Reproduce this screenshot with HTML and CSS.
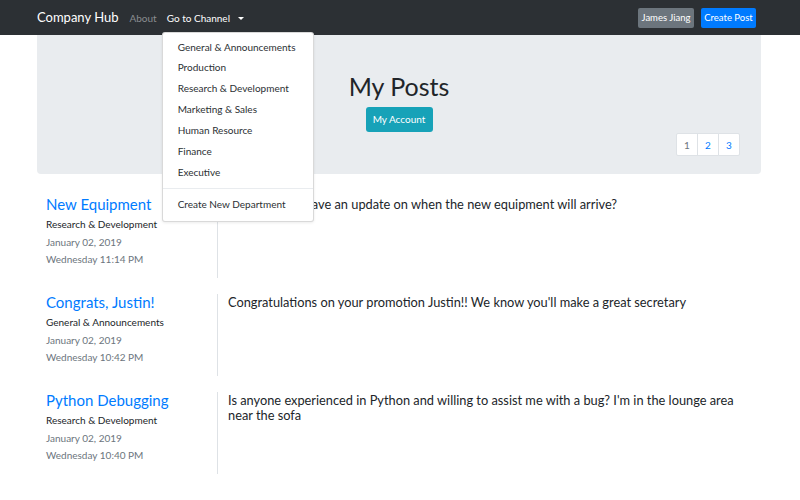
FILE: index.html
```html
<!DOCTYPE html>
<html>
<head>
<meta charset="utf-8">
<title>Company Hub</title>
<link rel="stylesheet" href="styles.css">
</head>
<body>
<nav class="navbar">
  <div class="nav-left">
    <a class="brand" href="#">Company Hub</a>
    <a class="nav-link muted" href="#">About</a>
    <div class="dropdown">
      <a class="nav-link active" href="#">Go to Channel <span class="caret"></span></a>
      <div class="dropdown-menu">
        <a class="dropdown-item" href="#">General &amp; Announcements</a>
        <a class="dropdown-item" href="#">Production</a>
        <a class="dropdown-item" href="#">Research &amp; Development</a>
        <a class="dropdown-item" href="#">Marketing &amp; Sales</a>
        <a class="dropdown-item" href="#">Human Resource</a>
        <a class="dropdown-item" href="#">Finance</a>
        <a class="dropdown-item" href="#">Executive</a>
        <div class="dropdown-divider"></div>
        <a class="dropdown-item" href="#">Create New Department</a>
      </div>
    </div>
  </div>
  <div class="nav-right">
    <a class="btn btn-secondary" href="#">James Jiang</a>
    <a class="btn btn-primary" href="#">Create Post</a>
  </div>
</nav>

<main class="container">
  <section class="jumbotron">
    <h1 class="title">My Posts</h1>
    <a class="btn btn-info" href="#">My Account</a>
    <ul class="pagination">
      <li class="page-item disabled">1</li>
      <li class="page-item">2</li>
      <li class="page-item">3</li>
    </ul>
  </section>

  <article class="post">
    <div class="post-meta">
      <h4 class="post-title">New Equipment</h4>
      <div class="post-channel">Research &amp; Development</div>
      <div class="post-date">January 02, 2019</div>
      <div class="post-date">Wednesday 11:14 PM</div>
    </div>
    <div class="post-body">Does anyone have an update on when the new equipment will arrive?</div>
  </article>

  <article class="post">
    <div class="post-meta">
      <h4 class="post-title">Congrats, Justin!</h4>
      <div class="post-channel">General &amp; Announcements</div>
      <div class="post-date">January 02, 2019</div>
      <div class="post-date">Wednesday 10:42 PM</div>
    </div>
    <div class="post-body">Congratulations on your promotion Justin!! We know you'll make a great secretary</div>
  </article>

  <article class="post">
    <div class="post-meta">
      <h4 class="post-title">Python Debugging</h4>
      <div class="post-channel">Research &amp; Development</div>
      <div class="post-date">January 02, 2019</div>
      <div class="post-date">Wednesday 10:40 PM</div>
    </div>
    <div class="post-body">Is anyone experienced in Python and willing to assist me with a bug? I'm in the lounge area near the sofa</div>
  </article>
</main>
</body>
</html>
```

FILE: styles.css
```css
* { box-sizing: border-box; }
html, body { margin: 0; padding: 0; }
body {
  font-family: Lato, "Open Sans", sans-serif;
  color: #212529;
  background: #fff;
  width: 800px;
  height: 500px;
  overflow: hidden;
}
a { text-decoration: none; color: inherit; }

.navbar {
  height: 35px;
  background: #2c3034;
  display: flex;
  align-items: center;
  justify-content: space-between;
  padding: 0 44px 0 37px;
}
.nav-left { display: flex; align-items: center; }
.brand {
  display: block;
  color: #fff;
  font-size: 13px;
  line-height: 16px;
  margin-right: 11px;
  margin-top: -1px;
}
.nav-link {
  display: block;
  font-size: 10px;
  line-height: 14px;
  margin-right: 10px;
  white-space: nowrap;
}
.nav-link.muted { color: #8a8d90; }
.nav-link.active { color: #fff; }
.caret {
  display: inline-block;
  width: 0; height: 0;
  margin-left: 5px;
  vertical-align: 2px;
  border-left: 3px solid transparent;
  border-right: 3px solid transparent;
  border-top: 3px solid #fff;
}
.dropdown { position: relative; }
.dropdown-menu {
  position: absolute;
  top: 21px;
  left: -5px;
  width: 152px;
  background: #fff;
  border: 1px solid rgba(0,0,0,.15);
  border-radius: 3px;
  box-shadow: 0 1px 3px rgba(0,0,0,.08);
  padding: 4px 0 6px;
  z-index: 10;
  display: flex;
  flex-direction: column;
}
.dropdown-item {
  display: block;
  font-size: 10px;
  color: #2b2f33;
  line-height: 20.9px;
  padding: 0 15px;
  white-space: nowrap;
}
.dropdown-divider {
  height: 0;
  border-top: 1px solid #e9ecef;
  margin: 5px 0 5px;
}
.nav-right { display: flex; gap: 7px; }
.btn {
  display: inline-block;
  font-size: 9.5px;
  line-height: 20px;
  height: 20px;
  padding: 0;
  border-radius: 2px;
  color: #fff;
  text-align: center;
  white-space: nowrap;
}
.btn-secondary { background: #6c757d; width: 56px; }
.btn-primary { background: #007bff; width: 55px; }
.btn-info {
  background: #17a2b8;
  width: 67px;
  height: 25px;
  line-height: 25px;
  font-size: 10px;
  border-radius: 3px;
}

.container {
  width: 724px;
  margin-left: 37px;
}
.jumbotron {
  background: #e9ecef;
  border-radius: 0 0 4px 4px;
  padding: 36px 21px 18px;
  display: flex;
  flex-direction: column;
  align-items: center;
}
.title {
  margin: 0 0 5px;
  font-size: 25px;
  line-height: 31px;
  font-weight: 400;
}
.pagination {
  list-style: none;
  margin: 1px 0 0;
  padding: 0;
  display: flex;
  align-self: flex-end;
}
.page-item {
  width: 22px;
  height: 23px;
  line-height: 23px;
  text-align: center;
  font-size: 10px;
  background: #fff;
  border: 1px solid #dee2e6;
  margin-left: -1px;
  color: #007bff;
}
.page-item:first-child { border-radius: 2px 0 0 2px; }
.page-item:last-child { border-radius: 0 2px 2px 0; }
.page-item.disabled { color: #6c757d; }

.post {
  display: grid;
  grid-template-columns: 181px 1fr;
  margin-top: 22px;
}
.post + .post { margin-top: 16px; }
.post-meta {
  border-right: 1px solid #dee2e6;
  padding: 0 9px 10px;
}
.post-title {
  margin: 0 0 4px;
  font-size: 15px;
  line-height: 16px;
  font-weight: 400;
  color: #007bff;
}
.post-channel {
  font-size: 10px;
  line-height: 16px;
  margin-bottom: 2px;
}
.post-date {
  font-size: 10px;
  line-height: 17px;
  color: #6c757d;
}
.post-body {
  padding: 1px 9px 0 10px;
  font-size: 12.8px;
  line-height: 15px;
}
```
